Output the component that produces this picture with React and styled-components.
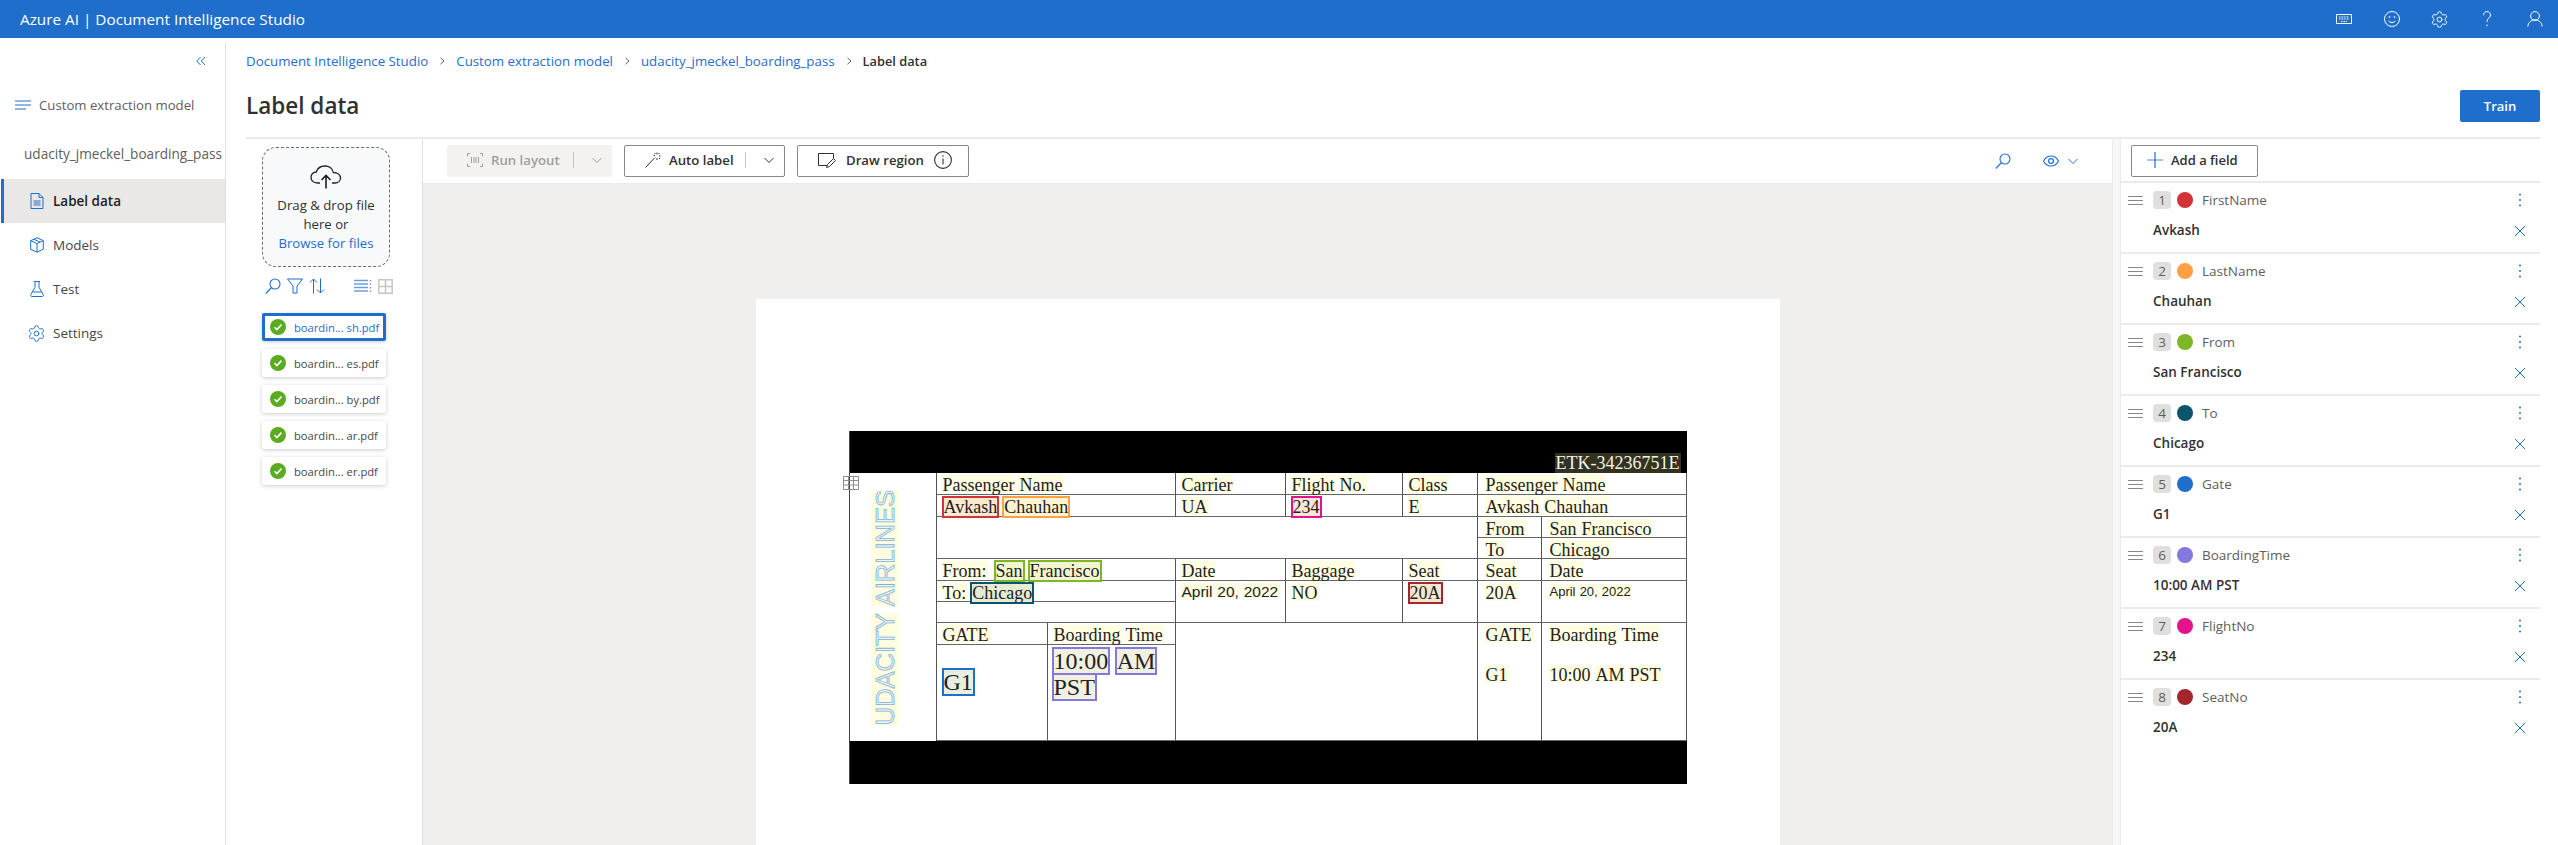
import React from 'react';
import styled, {createGlobalStyle} from 'styled-components';
import {Settings} from 'lucide-react';

const blue = '#1f6ecb';
const sans = '"Open Sans", "Noto Sans", Arial, sans-serif';
const serif = '"Liberation Serif", "Times New Roman", serif';

const GlobalStyle = createGlobalStyle`
    html, body { margin: 0; padding: 0; background: white; }
    body { font-family: ${sans}; color: #323130; }
    * { box-sizing: border-box; }
    svg { display: block; flex: none; }
`

const Page = styled.div`
    height: 845px;
    display: flex;
    flex-direction: column;
    overflow: hidden;
`

const TopBar = styled.header`
    height: 38px;
    flex: none;
    background: ${blue};
    color: white;
    display: flex;
    align-items: center;
    justify-content: space-between;
    padding: 0 15px 0 20px;
    font-size: 15.3px;
`

const TopIcons = styled.div`
    display: flex;
    align-items: center;
    gap: 32px;
`

const Gear = styled(Settings)`
    width: 19px;
    height: 19px;
    margin: ${p => p.$nav ? '-2px -2px -2px -3px' : '-2px'};
`

const Body = styled.div`
    flex: 1;
    min-height: 0;
    display: flex;
`

const Sidebar = styled.aside`
    width: 226px;
    flex: none;
    margin-top: 5px;
    border-right: 1px solid #e1dfdd;
    display: flex;
    flex-direction: column;
`

const CollapseRow = styled.div`
    height: 36px;
    display: flex;
    align-items: center;
    justify-content: flex-end;
    padding-right: 19px;
`

const NavHeader = styled.div`
    height: 26px;
    margin-top: 13px;
    padding-left: 15px;
    display: flex;
    align-items: center;
    gap: 8px;
    font-size: 13.2px;
    color: #605e5c;
`

const ModelName = styled.div`
    height: 26px;
    margin: 23px 0 12px;
    padding-left: 24px;
    font-size: 13.6px;
    line-height: 26px;
    font-weight: 500;
    color: #605e5c;
    white-space: nowrap;
`

const NavItem = styled.div`
    height: 44px;
    margin-left: 1px;
    padding-left: ${p => p.$active ? 26 : 29}px;
    display: flex;
    align-items: center;
    gap: 9px;
    font-size: 13.5px;
    font-weight: ${p => p.$active ? 600 : 400};
    color: ${p => p.$active ? '#201f1e' : '#484644'};
    background: ${p => p.$active ? '#e9e8e6' : 'transparent'};
    border-left: ${p => p.$active ? `3px solid ${blue}` : 'none'};
`

const Main = styled.main`
    flex: 1;
    min-width: 0;
    display: flex;
    flex-direction: column;
    padding: 0 18px 0 20px;
`

const MainHead = styled.div`
    height: 101px;
    flex: none;
    padding-top: 13px;
    border-bottom: 2px solid #edebe9;
`

const Crumbs = styled.nav`
    height: 20px;
    display: flex;
    align-items: center;
    gap: 10px;
    font-size: 13.3px;
    color: ${blue};
`

const CrumbNow = styled.span`
    font-size: 12.8px;
    font-weight: 600;
    color: #323130;
`

const TitleRow = styled.div`
    margin-top: 19px;
    display: flex;
    align-items: center;
    justify-content: space-between;
`

const Title = styled.h1`
    margin: 0;
    font-size: 22.5px;
    line-height: 32px;
    font-weight: 600;
    color: #323130;
`

const TrainButton = styled.button`
    width: 80px;
    height: 32px;
    border: none;
    border-radius: 2px;
    background: ${blue};
    color: white;
    font: 600 13px ${sans};
`

const Workspace = styled.div`
    flex: 1;
    min-height: 0;
    display: flex;
`

const FilePanel = styled.section`
    width: 177px;
    flex: none;
    padding: 8px 0 0 16px;
    border-right: 1px solid #e1dfdd;
`

const DropZone = styled.div`
    width: 128px;
    height: 120px;
    padding-top: 17px;
    border: 1px dashed #6b6a68;
    border-radius: 14px;
    background: #f8f9fa;
    display: flex;
    flex-direction: column;
    align-items: center;
    font-size: 13.2px;
    line-height: 19px;
    color: #323130;
`

const DropText = styled.div`
    margin-top: 7px;
    text-align: center;
`

const BrowseLink = styled.div`
    color: ${blue};
`

const FileTools = styled.div`
    height: 20px;
    margin: 9px 0 17px 3px;
    display: flex;
    align-items: center;
    gap: 6px;
`

const ToolSpacer = styled.div`
    width: 17px;
`

const FileList = styled.div`
    display: flex;
    flex-direction: column;
    gap: 8px;
`

const FileCard = styled.div`
    width: 124px;
    height: 28px;
    padding-left: ${p => p.$active ? 5 : 8}px;
    display: flex;
    align-items: center;
    gap: 8px;
    border: ${p => p.$active ? `3px solid ${blue}` : 'none'};
    border-radius: 2px;
    background: white;
    box-shadow: 0 1px 4px rgba(0, 0, 0, 0.2);
    font-size: 11.2px;
    white-space: nowrap;
    color: ${p => p.$active ? blue : '#484644'};
`

const Center = styled.section`
    flex: 1;
    min-width: 0;
    display: flex;
    flex-direction: column;
`

const Toolbar = styled.div`
    height: 45px;
    flex: none;
    padding: 0 33px 0 24px;
    display: flex;
    align-items: center;
    gap: 12px;
    border-bottom: 1px solid #edebe9;
`

const ToolGroup = styled.div`
    height: 32px;
    width: ${p => p.$w}px;
    display: flex;
    align-items: center;
    padding: 0 0 2px ${p => p.$pad}px;
    gap: ${p => p.$gap || 8}px;
    border: ${p => p.$disabled ? 'none' : '1px solid #8a8886'};
    border-radius: 2px;
    background: ${p => p.$disabled ? '#f3f2f1' : 'white'};
    color: ${p => p.$disabled ? '#a19f9d' : '#323130'};
    font-size: 13.2px;
    font-weight: 600;
    white-space: nowrap;
`

const SplitLine = styled.span`
    width: 1px;
    height: 16px;
    margin-left: auto;
    background: #c8c6c4;
`

const ChevronSlot = styled.span`
    width: 30px;
    display: flex;
    justify-content: center;
`

const ToolRight = styled.div`
    margin-left: auto;
    display: flex;
    align-items: center;
    gap: 32px;
`

const EyeMenu = styled.div`
    display: flex;
    align-items: center;
    gap: 8px;
`

const Canvas = styled.div`
    flex: 1;
    min-height: 0;
    padding-top: 115px;
    background: #f0efed;
    display: flex;
    justify-content: center;
    overflow: hidden;
`

const Sheet = styled.div`
    width: 1024px;
    height: 600px;
    flex: none;
    padding: 132px 0 0 93px;
    background: white;
`

const Doc = styled.div`
    position: relative;
    width: 838px;
    display: grid;
    grid-template-columns: 87px 111px 128px 110px 117px 75px 64px 145px;
    grid-template-rows: 42px 22px 22px 21px 21px 22px 21px 21px 22px 96px 43px;
    border-left: 1px solid #444;
    font-family: ${serif};
    font-size: 18px;
    line-height: 20px;
    word-spacing: -1.5px;
    color: #222;
`

const Band = styled.div`
    grid-column: 1 / -1;
    grid-row: ${p => p.$row};
    background: black;
    display: flex;
    align-items: flex-end;
    justify-content: flex-end;
    padding-right: 6px;
`

const Cell = styled.div`
    grid-column: ${p => p.$col};
    grid-row: ${p => p.$row};
    padding: ${p => p.$top ?? 2}px 0 0 ${p => p.$left ?? 5}px;
    border-right: 1px solid #555;
    border-bottom: 1px solid #666;
    font-family: ${p => p.$sans ? '"Liberation Sans", Arial, sans-serif' : 'inherit'};
    font-size: ${p => p.$size || 18}px;
    line-height: ${p => p.$lh || 20}px;
    white-space: ${p => p.$wrap ? 'normal' : 'nowrap'};
`

const LogoCell = styled.div`
    grid-column: 1;
    grid-row: 2 / 11;
    padding: 17px 0 0 22px;
    border-right: 1px solid #555;
    display: flex;
    align-items: flex-start;
`

const LogoText = styled.div`
    writing-mode: vertical-rl;
    transform: rotate(180deg);
    font-family: "Liberation Sans", Arial, sans-serif;
    font-size: 25.5px;
    line-height: 27px;
    word-spacing: 0;
    white-space: nowrap;
    color: #eef5f6;
    -webkit-text-stroke: 0.8px #7fb2d4;
`

const LogoWord = styled.span`
    background: #fefde0;
`

// the tint stops short of the text box so that it leaves the ruled line under it visible
const wordTint = p => p.$dark ? '#33321f' : p.$box ? `color-mix(in srgb, ${p.$box} 10%, #fefde0)` : '#fefde0'

const Word = styled.span`
    padding: 0 1px;
    margin: 0 ${p => p.$box ? 1 : 0}px;
    background: linear-gradient(${wordTint}, ${wordTint}) top / 100% ${p => p.$box || p.$dark ? 100 : 88}% no-repeat;
    color: ${p => p.$dark ? '#f4f4e8' : 'inherit'};
    outline: ${p => p.$box ? `2px solid ${p.$box}` : 'none'};
    outline-offset: -1px;
`

const TableMark = styled.div`
    position: absolute;
    left: -7px;
    top: 44px;
`

const Gutter = styled.div`
    width: 9px;
    flex: none;
    background: #f8f7f6;
    border-left: 1px solid #edebe9;
    border-right: 1px solid #edebe9;
`

const FieldPanel = styled.section`
    width: 419px;
    flex: none;
`

const AddBar = styled.div`
    height: 44px;
    padding: 6px 0 0 10px;
    border-bottom: 2px solid #edebe9;
`

const AddButton = styled.button`
    width: 127px;
    height: 32px;
    padding: 0 0 2px 15px;
    display: flex;
    align-items: center;
    gap: 8px;
    border: 1px solid #8a8886;
    border-radius: 2px;
    background: white;
    color: #323130;
    font: 600 13px ${sans};
`

const FieldRow = styled.div`
    height: 71px;
    padding: 8px 12px 0 7px;
    border-bottom: 2px solid #edebe9;
    &:last-child { border-bottom: none; }
`

const FieldTop = styled.div`
    height: 18px;
    display: flex;
    align-items: center;
`

const Handle = styled.span`
    width: 15px;
    margin-right: 10px;
`

const Badge = styled.span`
    width: 18px;
    height: 18px;
    border-radius: 4px;
    background: #e1dfdd;
    color: #605e5c;
    font-size: 13.5px;
    line-height: 18px;
    text-align: center;
`

const ColorDot = styled.span`
    width: 16px;
    height: 16px;
    margin: 0 9px 0 6px;
    border-radius: 50%;
    background: ${p => p.$color};
`

const FieldName = styled.span`
    flex: 1;
    font-size: 13.5px;
    color: #605e5c;
`

const FieldValue = styled.div`
    height: 18px;
    margin: 13px 0 0 25px;
    display: flex;
    align-items: center;
    justify-content: space-between;
    font-size: 13.5px;
    font-weight: 600;
    color: #323130;
`

const ValueText = styled.span`
    margin-bottom: 2px;
`

const ActionSlot = styled.span`
    width: 16px;
    display: flex;
    justify-content: center;
`

function Svg({size = 16, h, color = blue, sw = 1, children}) {
    return (
        <svg width={size} height={h || size} viewBox={`0 0 ${size} ${h || size}`} fill="none" stroke={color} strokeWidth={sw}>
            {children}
        </svg>
    )
}

const Chevron = ({color = '#605e5c'}) => (
    <Svg size={12} color={color}><path d="M1.5 4l4.5 4.5L10.5 4" /></Svg>
)

const CrumbChevron = () => (
    <Svg size={8} color="#605e5c"><path d="M2.5 .8L6 4 2.5 7.2" /></Svg>
)

const SearchIcon = () => (
    <Svg size={16} sw={1.1}><circle cx="10" cy="6" r="5" /><path d="M6.5 9.5L.8 15.5" /></Svg>
)

const navItems = [
    {label: 'Label data', active: true, icon: (
        <Svg size={14} h={16}><path d="M1 .5h8l4 4v11H1z" /><path d="M9 .5v4h4M3.5 8h7M3.5 10h7M3.5 12h7" /></Svg>
    )},
    {label: 'Models', icon: (
        <Svg size={14} h={16}><path d="M7 .8l6.3 2.8v8.6L7 15.2.7 12.2V3.6z" /><path d="M.7 3.6L7 6.6l6.3-3M7 6.6v8.6M3.8 2.2l6.3 3" /></Svg>
    )},
    {label: 'Test', icon: (
        <Svg size={14} h={16}><path d="M4 .5h6M5 .5v5.8L.8 13.5c-.5 1 0 2 1.2 2h10c1.2 0 1.7-1 1.2-2L9 6.3V.5M2.5 11h9" /></Svg>
    )},
    {label: 'Settings', icon: <Gear $nav color={blue} strokeWidth={1.2} />},
]

const files = ['boardin... sh.pdf', 'boardin... es.pdf', 'boardin... by.pdf', 'boardin...  ar.pdf', 'boardin...  er.pdf']

const fields = [
    {name: 'FirstName', value: 'Avkash', color: '#d13438'},
    {name: 'LastName', value: 'Chauhan', color: '#ffa044'},
    {name: 'From', value: 'San Francisco', color: '#7fb628'},
    {name: 'To', value: 'Chicago', color: '#0b556a'},
    {name: 'Gate', value: 'G1', color: blue},
    {name: 'BoardingTime', value: '10:00 AM PST', color: '#8378de'},
    {name: 'FlightNo', value: '234', color: '#e3138d'},
    {name: 'SeatNo', value: '20A', color: '#a4262c'},
]

// passes the words of one text as separate highlighted spans
const Words = ({text}) => text.split(' ').map((w, i) => <React.Fragment key={i}>{i > 0 && ' '}<Word>{w}</Word></React.Fragment>)

function BoardingPass() {
    return (
        <Doc>
            <TableMark>
                <Svg size={16} color="#8d8d8d"><path d="M.5 1.5h15v13H.5zM.5 5.5h15M.5 10h15M5.5 1.5v13M10.5 1.5v13" /></Svg>
            </TableMark>
            <Band $row="1"><Word $dark>ETK-34236751E</Word></Band>
            <LogoCell><LogoText><LogoWord>UDACITY</LogoWord> <LogoWord>AIRLINES</LogoWord></LogoText></LogoCell>

            <Cell $col="2 / 4" $row="2"><Words text="Passenger Name" /></Cell>
            <Cell $col="4" $row="2"><Word>Carrier</Word></Cell>
            <Cell $col="5" $row="2"><Words text="Flight No." /></Cell>
            <Cell $col="6" $row="2"><Word>Class</Word></Cell>
            <Cell $col="7 / 9" $row="2" $left={7}><Words text="Passenger Name" /></Cell>

            <Cell $col="2 / 4" $row="3"><Word $box="#d13438">Avkash</Word> <Word $box="#ffa044">Chauhan</Word></Cell>
            <Cell $col="4" $row="3"><Word>UA</Word></Cell>
            <Cell $col="5" $row="3"><Word $box="#e3138d">234</Word></Cell>
            <Cell $col="6" $row="3"><Word>E</Word></Cell>
            <Cell $col="7 / 9" $row="3" $left={7}><Words text="Avkash Chauhan" /></Cell>

            <Cell $col="2 / 7" $row="4 / 6" />
            <Cell $col="7" $row="4" $left={7}><Word>From</Word></Cell>
            <Cell $col="8" $row="4" $left={7}><Words text="San Francisco" /></Cell>
            <Cell $col="7" $row="5" $left={7}><Word>To</Word></Cell>
            <Cell $col="8" $row="5" $left={7}><Word>Chicago</Word></Cell>

            <Cell $col="2 / 4" $row="6"><Word>From:</Word>{'\u00a0 '}<Word $box="#7fb628">San</Word> <Word $box="#7fb628">Francisco</Word></Cell>
            <Cell $col="4" $row="6"><Word>Date</Word></Cell>
            <Cell $col="5" $row="6"><Word>Baggage</Word></Cell>
            <Cell $col="6" $row="6"><Word>Seat</Word></Cell>
            <Cell $col="7" $row="6" $left={7}><Word>Seat</Word></Cell>
            <Cell $col="8" $row="6" $left={7}><Word>Date</Word></Cell>

            <Cell $col="2 / 4" $row="7"><Word>To:</Word> <Word $box="#0b556a">Chicago</Word></Cell>
            <Cell $col="2 / 4" $row="8" />
            <Cell $col="4" $row="7 / 9" $sans $size={15.5} $top={1}><Words text="April 20, 2022" /></Cell>
            <Cell $col="5" $row="7 / 9"><Word>NO</Word></Cell>
            <Cell $col="6" $row="7 / 9"><Word $box="#a4262c">20A</Word></Cell>
            <Cell $col="7" $row="7 / 9" $left={7}><Word>20A</Word></Cell>
            <Cell $col="8" $row="7 / 9" $left={7} $sans $size={13} $top={1}><Words text="April 20, 2022" /></Cell>

            <Cell $col="2" $row="9"><Word>GATE</Word></Cell>
            <Cell $col="3" $row="9"><Words text="Boarding Time" /></Cell>
            <Cell $col="4 / 7" $row="9 / 11" />
            <Cell $col="7" $row="9 / 11" $left={7}>
                <Word>GATE</Word><br /><br /><Word>G1</Word>
            </Cell>
            <Cell $col="8" $row="9 / 11" $left={7}>
                <Words text="Boarding Time" /><br /><br /><Words text="10:00 AM PST" />
            </Cell>

            <Cell $col="2" $row="10" $size={24} $top={24} $lh={26}><Word $box={blue}>G1</Word></Cell>
            <Cell $col="3" $row="10" $size={24} $top={3} $lh={26} $left={4} $wrap>
                <Word $box="#8378de">10:00</Word> <Word $box="#8378de">AM</Word> <Word $box="#8378de">PST</Word>
            </Cell>
            <Band $row="11" />
        </Doc>
    )
}

export default function App() {
    return (
        <Page>
            <GlobalStyle />
            <TopBar>
                <span>Azure AI | Document Intelligence Studio</span>
                <TopIcons>
                    <Svg size={16} h={10} color="white"><path d="M.5.5h15v9H.5z" /><path d="M3 3h10M3 5h10M5 7.5h6" strokeDasharray="1 .6" /></Svg>
                    <Svg size={16} color="white"><circle cx="8" cy="8" r="7.5" /><circle cx="5.5" cy="6" r=".5" /><circle cx="10.5" cy="6" r=".5" /><path d="M4.5 9.8c1.6 2.3 5.4 2.3 7 0" /></Svg>
                    <Gear color="white" strokeWidth={1.2} />
                    <Svg size={16} color="white"><path d="M4.5 4.2C4.5 2 6 .6 8 .6s3.5 1.4 3.5 3.4c0 3-3.5 3-3.5 6.8M8 13.5v1.8" /></Svg>
                    <Svg size={16} color="white"><circle cx="8" cy="5" r="4.4" /><path d="M.8 15.5c.4-4 3.4-6.6 7.2-6.6s6.8 2.6 7.2 6.6" /></Svg>
                </TopIcons>
            </TopBar>
            <Body>
                <Sidebar>
                    <CollapseRow>
                        <Svg size={10}><path d="M4.5 1L.8 5l3.7 4M9 1L5.3 5 9 9" /></Svg>
                    </CollapseRow>
                    <NavHeader>
                        <Svg size={16} h={10}><path d="M0 1h16M0 5h16M0 9h11" /></Svg>
                        Custom extraction model
                    </NavHeader>
                    <ModelName>udacity_jmeckel_boarding_pass</ModelName>
                    {navItems.map(item => (
                        <NavItem key={item.label} $active={item.active}>{item.icon}{item.label}</NavItem>
                    ))}
                </Sidebar>
                <Main>
                    <MainHead>
                        <Crumbs>
                            <span>Document Intelligence Studio</span>
                            <CrumbChevron />
                            <span>Custom extraction model</span>
                            <CrumbChevron />
                            <span>udacity_jmeckel_boarding_pass</span>
                            <CrumbChevron />
                            <CrumbNow>Label data</CrumbNow>
                        </Crumbs>
                        <TitleRow>
                            <Title>Label data</Title>
                            <TrainButton>Train</TrainButton>
                        </TitleRow>
                    </MainHead>
                    <Workspace>
                        <FilePanel>
                            <DropZone>
                                <Svg size={32} h={24} color="#201f1e" sw={1.3}>
                                    <path d="M10 18H7.5C3.5 18 1 15.5 1 12.3c0-3 2.3-5.3 5.3-5.3C7.5 3.3 11 1 15 1c4.3 0 7.6 2.8 8.3 6.5 4 0 7.2 2 7.2 5.5 0 3-2.5 5-5.5 5h-3" />
                                    <path d="M16 23.5V11M11.5 15l4.5-4.5 4.5 4.5" strokeWidth="1.6" />
                                </Svg>
                                <DropText>
                                    Drag &amp; drop file<br />here or
                                    <BrowseLink>Browse for files</BrowseLink>
                                </DropText>
                            </DropZone>
                            <FileTools>
                                <SearchIcon />
                                <Svg size={16}><path d="M.5 1h15L10 8v7H6V8z" /></Svg>
                                <Svg size={16}><path d="M4.5 15.5V1M1 4.5L4.5 1 8 4.5M11.5.5V15M8 11.5l3.5 3.5 3.5-3.5" /></Svg>
                                <ToolSpacer />
                                <Svg size={18} h={14} color="#6a9fdc" sw={1.5}><path d="M0 1.5h14M0 5h14M0 8.5h14M0 12h14M16.5 1v1.5M16.5 4.5V6M16.5 8v1.5M16.5 11.5V13" /></Svg>
                                <Svg size={15} color="#c8c6c4" sw={1.5}><path d="M.8.8h13.4v13.4H.8zM7.5.8v13.4M.8 7.5h13.4" /></Svg>
                            </FileTools>
                            <FileList>
                                {files.map((f, i) => (
                                    <FileCard key={f} $active={i === 0}>
                                        <Svg size={16} color="none">
                                            <circle cx="8" cy="8" r="8" fill="#5aab1f" />
                                            <path d="M4.5 8.2l2.4 2.4 4.6-5" stroke="white" strokeWidth="1.6" />
                                        </Svg>
                                        {f}
                                    </FileCard>
                                ))}
                            </FileList>
                        </FilePanel>
                        <Center>
                            <Toolbar>
                                <ToolGroup $w={165} $pad={20} $disabled>
                                    <Svg size={16} h={14} color="#a19f9d"><path d="M3 .5H.5v3M13 .5h2.5v3M3 13.5H.5v-3M13 13.5h2.5v-3M4.5 4v6M7 4v6M9 4v6M11.5 4v6" /></Svg>
                                    Run layout
                                    <SplitLine />
                                    <ChevronSlot><Chevron color="#a19f9d" /></ChevronSlot>
                                </ToolGroup>
                                <ToolGroup $w={161} $pad={20}>
                                    <Svg size={16} color="#323130"><path d="M.5 15.5L10 5.5M12 .5v2M12 6v2M8.5 3.5h1.5M14 4h1.5M9.5 1l1 1M14 6l1 1M14.5 1l-1 1" /></Svg>
                                    Auto label
                                    <SplitLine />
                                    <ChevronSlot><Chevron color="#323130" /></ChevronSlot>
                                </ToolGroup>
                                <ToolGroup $w={172} $pad={20} $gap={10}>
                                    <Svg size={18} h={16} color="#323130"><path d="M9 13.5H.5V1.5h15v5" /><path d="M8.5 15.5l1-3 6-6 2 2-6 6z" /></Svg>
                                    <span>Draw region</span>
                                    <Svg size={18} color="#323130" sw={1.1}><circle cx="9" cy="9" r="8.4" /><path d="M9 7.5v6M9 4.2v1.6" /></Svg>
                                </ToolGroup>
                                <ToolRight>
                                    <SearchIcon />
                                    <EyeMenu>
                                        <Svg size={16} h={12} sw={1.2}><path d="M.5 6C2 3 5 1 8 1s6 2 7.5 5C14 9 11 11 8 11S2 9 .5 6z" /><circle cx="8" cy="6" r="2.4" /></Svg>
                                        <Chevron color={blue} />
                                    </EyeMenu>
                                </ToolRight>
                            </Toolbar>
                            <Canvas>
                                <Sheet><BoardingPass /></Sheet>
                            </Canvas>
                        </Center>
                        <Gutter />
                        <FieldPanel>
                            <AddBar>
                                <AddButton>
                                    <Svg size={16} color="#6a9fdc" sw={1.2}><path d="M0 8h16" /><path d="M8 0v16" stroke={blue} /></Svg>
                                    Add a field
                                </AddButton>
                            </AddBar>
                            {fields.map((f, i) => (
                                <FieldRow key={f.name}>
                                    <FieldTop>
                                        <Handle><Svg size={15} h={9} color="#8a8886"><path d="M0 .5h15M0 4.5h15M0 8.5h15" /></Svg></Handle>
                                        <Badge>{i + 1}</Badge>
                                        <ColorDot $color={f.color} />
                                        <FieldName>{f.name}</FieldName>
                                        <ActionSlot><Svg size={4} h={14} color="none"><circle cx="2" cy="1.5" r="1" fill={blue} /><circle cx="2" cy="7" r="1" fill={blue} /><circle cx="2" cy="12.5" r="1" fill={blue} /></Svg></ActionSlot>
                                    </FieldTop>
                                    <FieldValue>
                                        <ValueText>{f.value}</ValueText>
                                        <ActionSlot><Svg size={12}><path d="M1 1l10 10M11 1L1 11" /></Svg></ActionSlot>
                                    </FieldValue>
                                </FieldRow>
                            ))}
                        </FieldPanel>
                    </Workspace>
                </Main>
            </Body>
        </Page>
    );
}
